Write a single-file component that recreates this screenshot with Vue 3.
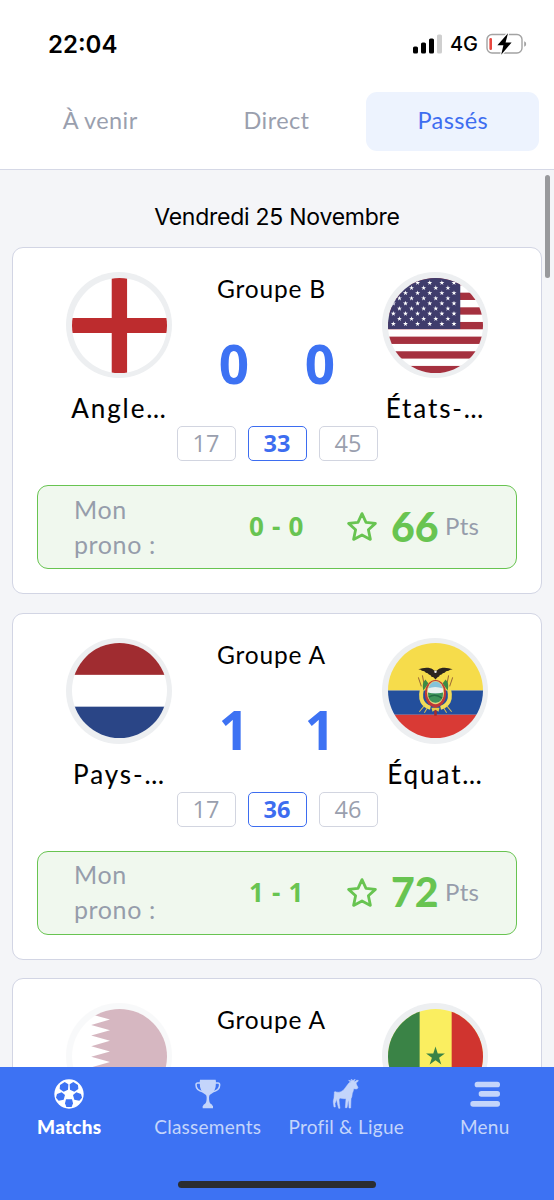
<script setup>
const tabs = [
  { label: 'À venir', active: false },
  { label: 'Direct', active: false },
  { label: 'Passés', active: true },
]

const matches = [
  {
    group: 'Groupe B',
    home: { name: 'Angle…', flag: 'england' },
    away: { name: 'États-…', flag: 'usa' },
    score: [0, 0],
    odds: [17, 33, 45],
    prono: '0 - 0',
    points: 66,
  },
  {
    group: 'Groupe A',
    home: { name: 'Pays-…', flag: 'netherlands' },
    away: { name: 'Équat…', flag: 'ecuador' },
    score: [1, 1],
    odds: [17, 36, 46],
    prono: '1 - 1',
    points: 72,
  },
  {
    group: 'Groupe A',
    home: { name: '', flag: 'qatar', faded: true },
    away: { name: '', flag: 'senegal' },
    score: [],
    odds: [],
  },
]

const nav = [
  { label: 'Matchs', icon: 'ball', active: true },
  { label: 'Classements', icon: 'cup' },
  { label: 'Profil & Ligue', icon: 'goat' },
  { label: 'Menu', icon: 'menu' },
]

function starPoints(cx, cy, r) {
  const pts = []
  for (let i = 0; i < 10; i++) {
    const a = -Math.PI / 2 + (i * Math.PI) / 5
    const d = i % 2 ? r * 0.382 : r
    pts.push((cx + d * Math.cos(a)).toFixed(2) + ',' + (cy + d * Math.sin(a)).toFixed(2))
  }
  return pts.join(' ')
}

const usStars = []
for (let row = 0; row < 9; row++) {
  for (let col = 0; col < 7; col++) {
    const x = 65.3 - col * 12 - (row % 2 ? 6 : 0)
    if (x > 1) usStars.push(starPoints(x, 4.8 + row * 5.08, 2.6))
  }
}

const qatarEdge = []
for (let i = 0; i < 9; i++) {
  qatarEdge.push(`37.6,${i * 10.5} 19,${i * 10.5 + 5.25}`)
}
const qatarPoints = '94,0 ' + qatarEdge.join(' ') + ' 37.6,94 94,94'
</script>

<template>
  <div class="screen">
    <header class="status">
      <span class="time">22:04</span>
      <div class="indicators">
        <svg class="signal" width="29" height="20" viewBox="0 0 29 20">
          <rect x="0" y="12.5" width="5" height="7" rx="1.6" />
          <rect x="8" y="8.5" width="5" height="11" rx="1.6" />
          <rect x="16" y="4.5" width="5" height="15" rx="1.6" />
          <rect x="24" y="0.5" width="5" height="19" rx="1.6" fill="#cfcfcf" />
        </svg>
        <span class="network">4G</span>
        <svg class="battery" width="41" height="24" viewBox="0 0 41 24">
          <rect x="1" y="2.5" width="35" height="18.5" rx="5" fill="none" stroke="#a3a3a3" stroke-width="1.4" />
          <path d="M38.2 9.2q2 .8 2 2.8t-2 2.8z" fill="#a3a3a3" />
          <rect x="3.4" y="6" width="2.6" height="12" rx="1.2" fill="#e8473f" />
          <path d="M22 1.2 11.4 13.2h6L15.2 22.8 25.6 10.4h-6z" fill="#000" stroke="#fff" stroke-width="2.4" paint-order="stroke" />
        </svg>
      </div>
    </header>

    <nav class="tabs">
      <div v-for="t in tabs" :key="t.label" class="tab" :class="{ active: t.active }">{{ t.label }}</div>
    </nav>

    <main class="list">
      <div class="scrollbar"></div>
      <h1 class="day">Vendredi 25 Novembre</h1>
      <article v-for="(m, i) in matches" :key="i" class="card">
        <div class="top">
          <div v-for="(team, side) in { home: m.home, away: m.away }" :key="side" class="team" :class="side">
            <div class="flag" :class="{ faded: team.faded }">
              <svg width="95" height="95" viewBox="0 0 94 94">
                <g v-if="team.flag === 'england'">
                  <rect width="94" height="94" fill="#fff" />
                  <path d="M39.3 0h15.2v94H39.3zM0 39.5h94v15H0z" fill="#bd2c2e" />
                </g>
                <g v-else-if="team.flag === 'usa'">
                  <rect width="94" height="94" fill="#fff" />
                  <rect v-for="n in 7" :key="n" x="0" :y="(n - 1) * 14.5" width="94" height="7.25" fill="#a5313f" />
                  <rect width="71.5" height="50.5" fill="#3f3c6c" />
                  <polygon v-for="s in usStars" :key="s" :points="s" fill="#fff" />
                </g>
                <g v-else-if="team.flag === 'netherlands'">
                  <rect width="94" height="94" fill="#fff" />
                  <rect width="94" height="31.5" fill="#a02c30" />
                  <rect y="63" width="94" height="31" fill="#2a4586" />
                </g>
                <g v-else-if="team.flag === 'ecuador'">
                  <rect width="94" height="47" fill="#f6dc4b" />
                  <rect y="47" width="94" height="24" fill="#234f9c" />
                  <rect y="71" width="94" height="23" fill="#d93a35" />
                  <path d="M35 41q-4 11-1 17 3 5 8 6M59 41q4 11 1 17-3 5-8 6" fill="none" stroke="#f2dc57" stroke-width="4" />
                  <path d="M33 43 30 34M36 42l-2-10M61 43l3-9M58 42l2-10" stroke="#9b6a35" stroke-width="1" />
                  <path d="M35 47q-2-7 2-11l3 4zM59 47q2-7-2-11l-3 4z" fill="#3c8a45" />
                  <path d="M36 62l-5 6M39 64l-3 5M58 62l5 6M55 64l3 5" stroke="#d9bd55" stroke-width="1" />
                  <path d="M47 60v12" stroke="#a42c2c" stroke-width="2.5" />
                  <path d="M43 64h8l-1 4-3-2-3 2z" fill="#e6c748" />
                  <ellipse cx="47" cy="50" rx="10.5" ry="13.5" fill="#bd3938" />
                  <ellipse cx="47" cy="49" rx="8.5" ry="11.5" fill="#e7d777" />
                  <ellipse cx="47" cy="48.5" rx="7.5" ry="10.5" fill="#85c3da" />
                  <path d="M39.5 45q7-3 15 0v5h-15z" fill="#e9f0ef" />
                  <path d="M39.5 49q7 2 15 0 0 10-7.5 10t-7.5-10z" fill="#3f9358" />
                  <path d="M40.5 53.5q6-4 13 1" fill="none" stroke="#236b43" stroke-width="1.5" />
                  <path d="M30 26q5-2 10-1.5 4 .5 6 3 1-1 2 0 2-2.5 6-3 5-.5 10 1.5-3 0-4 1.5-3 0-4 2-2 .2-3 1.6-2 .2-2.5 2L49 34l-2 2-2-2-2-.7q-.5-2-2.5-2.2-1-1.400-3-1.600-1-2-4-2Q33 26 30 26z" fill="#2b241f" />
                  <circle cx="47" cy="28.5" r="1.2" fill="#eee" />
                </g>
                <g v-else-if="team.flag === 'qatar'">
                  <rect width="94" height="94" fill="#fff" />
                  <polygon :points="qatarPoints" fill="#8b3550" />
                </g>
                <g v-else>
                  <rect width="94" height="94" fill="#faee60" />
                  <rect width="31.3" height="94" fill="#3a8346" />
                  <rect x="63" width="31" height="94" fill="#d0342f" />
                  <polygon :points="starPoints(47, 47, 9.8)" fill="#3a8346" />
                </g>
              </svg>
            </div>
            <div class="name">{{ team.name }}</div>
          </div>
          <div class="middle">
            <div class="group">{{ m.group }}</div>
            <div class="score">
              <span v-for="(s, k) in m.score" :key="k">{{ s }}</span>
            </div>
          </div>
        </div>
        <div class="odds">
          <span v-for="(o, k) in m.odds" :key="k" class="odd" :class="{ picked: k === 1 }">{{ o }}</span>
        </div>
        <div v-if="m.prono" class="prono">
          <span class="label">Mon<br />prono :</span>
          <span class="guess">{{ m.prono }}</span>
          <svg class="star" width="32" height="32" viewBox="0 0 32 32">
            <path d="M16 2.6 20 11.3 29.4 12.4 22.4 18.8 24.4 28.4 16 24 7.6 28.4 9.6 18.8 2.6 12.4 12 11.3z" fill="none" stroke="#68c451" stroke-width="2.8" stroke-linejoin="round" />
          </svg>
          <span class="points">{{ m.points }}</span>
          <span class="unit">Pts</span>
        </div>
      </article>
    </main>

    <footer class="bar">
      <div class="items">
        <div v-for="n in nav" :key="n.label" class="item" :class="{ current: n.active }">
          <svg v-if="n.icon === 'ball'" width="30" height="30" viewBox="163 325 90 90">
            <circle cx="208" cy="370" r="44" fill="#fff" />
            <g fill="#3d72f3">
              <path d="M181 343l14-9 11 7-1 16-13 6-12-8z" />
              <path d="M235 343l-14-9-11 7 1 16 13 6 12-8z" />
              <path d="M172 370l14-5 10 8-4 14-15 3-8-9z" />
              <path d="M244 370l-14-5-10 8 4 14 15 3 8-9z" />
              <path d="M199 386h18l3 12-4 11h-16l-4-11z" />
            </g>
          </svg>
          <svg v-else-if="n.icon === 'cup'" width="30" height="30" viewBox="578 325 90 90">
            <path d="M599 327h47l1 7q0 31-18 38-3 2-3 9 0 16 6 19 4 1 5 6h1v7h-31v-7h1q1-5 5-6 6-3 6-19 0-7-3-9-18-7-18-38z" fill="currentColor" />
            <path d="M600 337h-8q-5 0-5 6 0 16 22 21M645 337h8q5 0 5 6 0 16-22 21" fill="none" stroke="currentColor" stroke-width="4.5" />
          </svg>
          <svg v-else-if="n.icon === 'goat'" width="30" height="30" viewBox="163 325 90 90">
            <path d="M173 364q2-3 5 0 8 2 15-1 8-3 13-12l10-13q3-4 8-4-7-1-8-5 5 2 9 1 0-2-2-4 5 1 6 5 2-5 7-4-4 2-4 5 5 1 8-3h5q-1 6-7 7l2 7 4 7q-1 5-5 5l-8-1q-1 8-4 14-1 12-4 16l-1 28h-5l-1-23-2 4-3 18h-5l2-27q-10 1-18-2l-3 5 1 12 2 14h-4l-4-15-2-12-3 8-2 4 1 11h-4l-2-13q-1-5 2-14l1-14z" fill="currentColor" stroke="currentColor" stroke-width="1.5" />
          </svg>
          <svg v-else width="30" height="30" viewBox="576 325 90 90">
            <g fill="currentColor">
              <rect x="590" y="333" width="76" height="17" rx="8" />
              <rect x="602" y="361" width="64" height="17" rx="8" />
              <rect x="577" y="391" width="89" height="17" rx="8" />
            </g>
          </svg>
          <span class="caption">{{ n.label }}</span>
        </div>
      </div>
      <div class="home-indicator"></div>
    </footer>
  </div>
</template>

<style>
body {
  margin: 0;
}
</style>

<style scoped>
.screen {
  width: 554px;
  height: 1200px;
  display: flex;
  flex-direction: column;
  overflow: hidden;
  background: #fff;
  font-family: Lato, "Open Sans", sans-serif;
  color: #000;
  white-space: nowrap;
}
.status {
  height: 91px;
  box-sizing: border-box;
  padding: 30px 27px 0 48px;
  display: flex;
  justify-content: space-between;
  align-items: flex-start;
  font-family: Inter, sans-serif;
}
.time {
  font-size: 24px;
  font-weight: 600;
  line-height: 29px;
}
.indicators {
  display: flex;
  align-items: center;
  height: 28px;
}
.network {
  margin: 0 8px;
  font-size: 20px;
  font-weight: 500;
}
.tabs {
  height: 79px;
  box-sizing: border-box;
  padding: 1px 15px 18px 13px;
  display: grid;
  grid-template-columns: 1fr 1fr 1fr;
  gap: 3px;
  border-bottom: 1px solid #d5d8e6;
}
.tab {
  border-radius: 11px;
  text-align: center;
  font-size: 23.5px;
  line-height: 57px;
  letter-spacing: 0.4px;
  text-indent: 1px;
  color: #9a9fae;
}
.tab.active {
  background: #edf3fe;
  color: #3d6df0;
}
.list {
  position: relative;
  flex: 1;
  min-height: 0;
  overflow: hidden;
  background: #f4f5f8;
  padding: 0 12px;
}
.scrollbar {
  position: absolute;
  right: 4px;
  top: 5px;
  width: 5px;
  height: 103px;
  border-radius: 3px;
  background: #98999c;
}
.day {
  margin: 32px 0 15px;
  text-align: center;
  font: 400 23px/30px Inter, sans-serif;
  letter-spacing: -0.25px;
}
.card {
  box-sizing: border-box;
  height: 347px;
  margin-bottom: 18.5px;
  padding: 24px 24px 0;
  border: 1px solid #d2d5e4;
  border-radius: 11px;
  background: #fff;
}
.top {
  display: grid;
  grid-template-columns: 106px 210px 106px;
  justify-content: center;
  height: 154.4px;
}
.team {
  grid-row: 1;
  text-align: center;
}
.home {
  grid-column: 1;
}
.away {
  grid-column: 3;
}
.flag {
  box-sizing: border-box;
  width: 106px;
  height: 106px;
  padding: 5.5px;
  border-radius: 50%;
  background: #edeff1;
}
.flag.faded {
  opacity: 0.35;
}
.flag svg {
  display: block;
  border-radius: 50%;
}
.name {
  margin-top: 14px;
  font-size: 26px;
  line-height: 32px;
  letter-spacing: 1.9px;
  text-indent: 1px;
  -webkit-text-stroke: 0.1px #000;
}
.middle {
  grid-column: 2;
  grid-row: 1;
  display: flex;
  flex-direction: column;
}
.group {
  padding-right: 11px;
  text-align: center;
  font-size: 24.5px;
  line-height: 33px;
  letter-spacing: 0.8px;
}
.score {
  display: flex;
  justify-content: center;
  gap: 42px;
  margin-top: 27px;
  font-family: "Open Sans", sans-serif;
  font-size: 53px;
  font-weight: 700;
  line-height: 64px;
  color: #3d72f3;
}
.score span {
  width: 44px;
  text-align: center;
}
.odds {
  display: flex;
  justify-content: center;
  gap: 12px;
  height: 35px;
}
.odd {
  box-sizing: border-box;
  width: 59px;
  height: 35px;
  border: 1px solid #d2d5e0;
  border-radius: 5px;
  text-align: center;
  font-family: "Open Sans", sans-serif;
  font-size: 23.5px;
  font-weight: 400;
  line-height: 33px;
  color: #9a9fae;
}
.odd.picked {
  border-color: #3d6df0;
  color: #3d6df0;
  font-weight: 700;
}
.prono {
  box-sizing: border-box;
  height: 84px;
  margin-top: 24px;
  padding-left: 36px;
  border: 1px solid #68c451;
  border-radius: 11px;
  background: #f0f8ee;
  display: flex;
  align-items: center;
}
.label {
  width: 175px;
  margin-top: -1px;
  font-size: 25px;
  line-height: 35px;
  letter-spacing: 0.6px;
  color: #969dab;
}
.guess {
  width: 97px;
  margin-top: -2px;
  font-family: "Open Sans", sans-serif;
  font-size: 26px;
  font-weight: 700;
  letter-spacing: 0.7px;
  color: #68c451;
}
.points {
  width: 54px;
  margin-left: 13px;
  margin-top: -1px;
  font-size: 41px;
  font-weight: 900;
  line-height: 50px;
  color: #68c451;
}
.unit {
  margin-top: -3px;
  font-size: 24px;
  letter-spacing: 0.3px;
  color: #969dab;
}
.bar {
  height: 133px;
  background: #3d72f3;
  display: flex;
  flex-direction: column;
  align-items: center;
  justify-content: space-between;
}
.items {
  width: 100%;
  display: grid;
  grid-template-columns: repeat(4, 1fr);
  padding-top: 12px;
}
.item {
  display: flex;
  flex-direction: column;
  align-items: center;
  color: #c4d5fb;
}
.caption {
  margin-top: 6px;
  font-size: 19px;
  line-height: 24px;
  letter-spacing: 0.25px;
}
.current {
  color: #fff;
  font-weight: 900;
}
.home-indicator {
  width: 198px;
  height: 7px;
  margin-bottom: 12px;
  border-radius: 4px;
  background: #2b2d31;
}
</style>
